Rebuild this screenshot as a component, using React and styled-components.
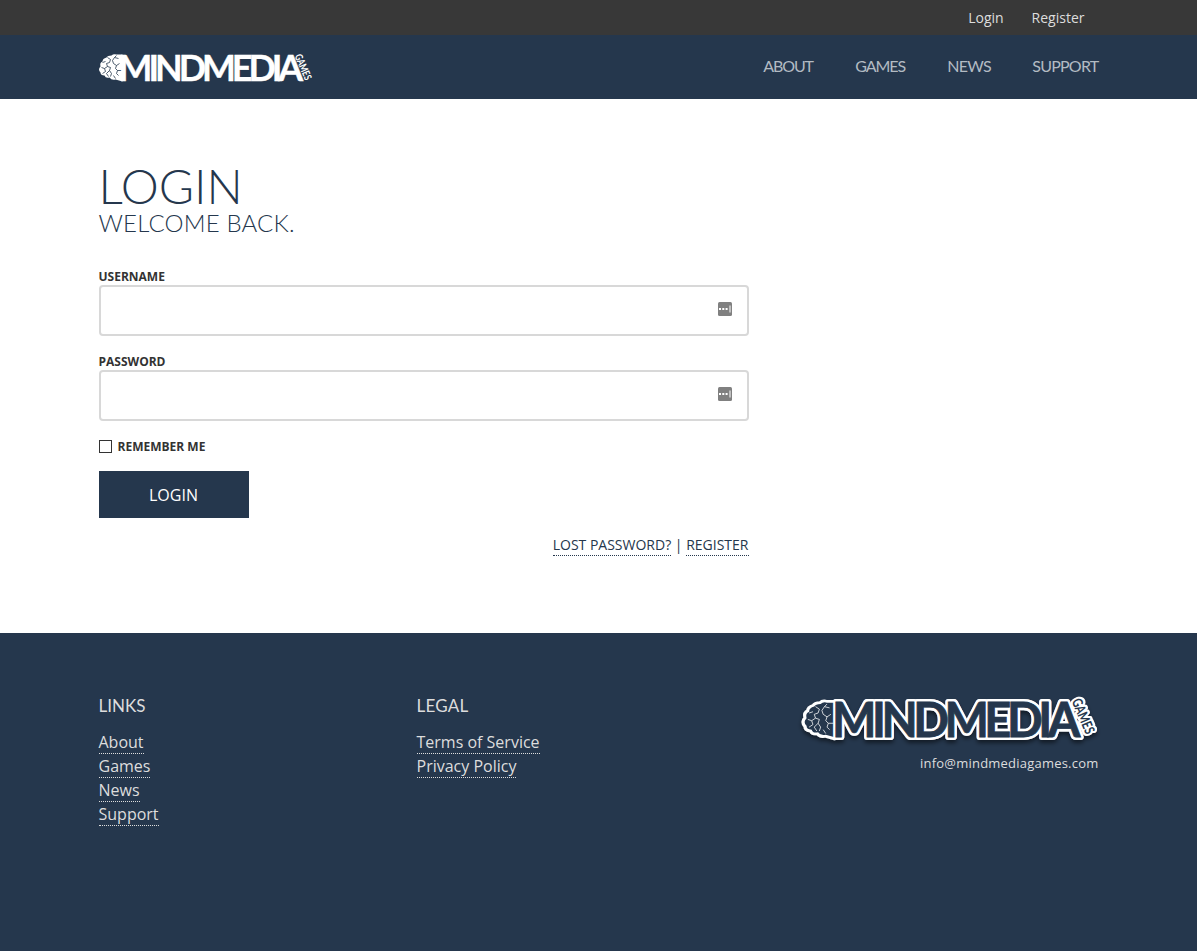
import React from 'react';
import styled, { createGlobalStyle } from 'styled-components';

const navy = '#25374d';

const GlobalStyle = createGlobalStyle`
  *, *::before, *::after { box-sizing: border-box; }
  body {
    margin: 0;
    background: #fff;
    color: #333;
    font-family: 'Open Sans', sans-serif;
    font-size: 16px;
  }
`;

const Page = styled.div`
  display: flex;
  flex-direction: column;
  height: 951px;
  overflow: hidden;
`;

const Container = styled.div`
  width: 1000px;
  margin: 0 auto;
`;

const TopBar = styled.div`
  flex: none;
  height: 35px;
  background: #383838;
`;

const TopLinks = styled(Container)`
  display: flex;
  justify-content: flex-end;
  gap: 28px;
  padding-right: 14px;
`;

const TopLink = styled.a`
  color: #ddd;
  font-size: 14px;
  line-height: 35px;
`;

const Header = styled.header`
  flex: none;
  height: 64px;
  background: ${navy};
`;

const HeaderInner = styled(Container)`
  display: flex;
  justify-content: space-between;
  height: 64px;
`;

const Nav = styled.nav`
  display: flex;
  gap: 41px;
`;

const NavLink = styled.a`
  width: ${(p) => p.$width}px;
  color: #b3bbc3;
  font-family: Lato, sans-serif;
  font-size: 16px;
  line-height: 61px;
  letter-spacing: ${(p) => p.$spacing}px;
  white-space: nowrap;
`;

const Main = styled.main`
  flex: none;
  height: 534px;
  padding-top: 62px;
`;

const Title = styled.h1`
  margin: 0;
  color: ${navy};
  font: 300 48px/50px Lato, sans-serif;
  letter-spacing: 0;
`;

const Subtitle = styled.h2`
  margin: 0 0 36px;
  color: ${navy};
  font: 300 24px/24px Lato, sans-serif;
  letter-spacing: 0.17px;
`;

const Form = styled.form`
  display: flex;
  flex-direction: column;
  align-items: flex-start;
  width: 650px;
`;

const Field = styled.label`
  display: block;
  width: 100%;
  height: 85px;
  font-size: 12px;
  font-weight: 700;
  line-height: 11px;
`;

const InputBox = styled.div`
  display: flex;
  align-items: center;
  width: 100%;
  height: 51px;
  margin-top: 3px;
  padding: 0 15px 3px 10px;
  border: 2px solid #d8d8d8;
  border-radius: 4px;
`;

const Input = styled.input`
  flex: 1;
  border: 0;
  outline: 0;
  background: transparent;
  font: 16px 'Open Sans', sans-serif;
`;

const Remember = styled.label`
  display: flex;
  align-items: center;
  gap: 6px;
  height: 13px;
  margin-top: -1px;
  font-size: 12px;
  font-weight: 700;
`;

const Checkbox = styled.input`
  appearance: none;
  width: 13px;
  height: 13px;
  margin: 0;
  border: 1px solid #333;
  background: #fff;
`;

const Submit = styled.button`
  width: 150px;
  height: 47px;
  margin-top: 18px;
  padding: 0;
  border: 0;
  background: ${navy};
  color: #fff;
  font: 16px 'Open Sans', sans-serif;
`;

const FormLinks = styled.div`
  align-self: flex-end;
  margin-top: 17px;
  color: ${navy};
  font-size: 14px;
  line-height: 20px;
`;

const DottedLink = styled.a`
  display: inline-block;
  border-bottom: 1px dotted currentColor;
`;

const Footer = styled.footer`
  flex: 1;
  background: ${navy};
  color: #ddd;
`;

const FooterInner = styled(Container)`
  display: grid;
  grid-template-columns: 318px 318px 1fr;
  padding-top: 60px;
`;

const FooterHeading = styled.h3`
  margin: 0 0 12px;
  font: 400 17px/25px Lato, sans-serif;
  letter-spacing: ${(p) => p.$spacing}px;
`;

const LinkList = styled.ul`
  margin: 0;
  padding: 0;
  list-style: none;
`;

const LinkItem = styled.li`
  height: 24px;
  line-height: 21px;

  ${DottedLink} {
    padding-top: 2px;
  }
`;

const Brand = styled.div`
  display: flex;
  flex-direction: column;
  align-items: flex-end;
`;

const Email = styled.a`
  margin-top: 2px;
  font-size: 13px;
  line-height: 20px;
  letter-spacing: 0.22px;
`;

const LogoArt = styled.svg`
  display: block;
  flex: none;
  overflow: visible;
`;

const KeyIcon = styled.svg`
  display: block;
  flex: none;
`;

const brainOutline =
  'M24 1 L18 1 Q15 0 13 2 Q9 2 8 4 Q4 5 4 8 Q1 9 2 13 Q-1 16 2 19 Q2 22 6 22 Q7 25 11 24 Q13 27 17 26 L24 28 Z';
const brainFolds =
  'M18 2 L16 4 L20 5 M16 4 L14 7 L15 10 M9 4 L12 6 L11 9 L8 10 M4 9 L7 8 M8 10 L9 13 L6 15 L3 14 M9 13 L12 14 L11 17 L13 20 M6 15 L7 18 L4 20 M15 10 L18 12 L17 15 L19 17 L23 17 M19 17 L18 20 L20 22 M11 17 L8 20 L10 23 M13 20 L12 23 M15 22 L17 25 M18 12 L21 10';

function HeaderLogo() {
  return (
    <LogoArt width="213" height="64" viewBox="0 0 213 64" aria-label="MindMedia Games">
      <g transform="translate(-0.5 18.5)">
        <path d={brainOutline} fill="#fff" />
        <path d={brainFolds} fill="none" stroke={navy} strokeWidth="0.8" />
      </g>
      <text transform="translate(19.5 45.7) scale(0.97 1)" fill="#fff" stroke="#fff" strokeWidth="0.4" fontFamily="Lato" fontWeight="700" fontSize="37" textLength="190.5" lengthAdjust="spacing">MINDMEDIA</text>
      <text transform="translate(195.5 21) rotate(67)" fill="#fff" fontFamily="Lato" fontWeight="700" fontSize="10.5" textLength="27" lengthAdjust="spacingAndGlyphs">GAMES</text>
    </LogoArt>
  );
}

function FooterLogo() {
  const word = { transform: 'translate(31 44) scale(0.97 1)', fontFamily: 'Lato', fontWeight: 700, fontSize: 48.5, textLength: 256, lengthAdjust: 'spacing' };
  const games = { transform: 'translate(270.5 8) rotate(67)', fontFamily: 'Lato', fontWeight: 700, fontSize: 14, textLength: 37, lengthAdjust: 'spacingAndGlyphs' };
  return (
    <LogoArt width="298" height="58" viewBox="0 0 298 58" aria-label="MindMedia Games">
      <defs>
        <filter id="logo-shadow" x="-5%" y="-20%" width="110%" height="150%">
          <feDropShadow dx="0" dy="3" stdDeviation="2" floodColor="#000" floodOpacity="0.5" />
        </filter>
      </defs>
      <g filter="url(#logo-shadow)" fill="#fff" stroke="#fff" strokeLinejoin="round">
        <path d={brainOutline} transform="translate(2 8) scale(1.32)" strokeWidth="3.5" />
        <text {...word} strokeWidth="6">MINDMEDIA</text>
        <text {...games} strokeWidth="5">GAMES</text>
      </g>
      <path d={brainOutline} transform="translate(3 8.5) scale(1.28)" fill={navy} />
      <path d={brainFolds} transform="translate(3 8.5) scale(1.28)" fill="none" stroke="#fff" strokeWidth="0.6" />
      <text {...word} fill="none" stroke="#fff" strokeWidth="5.5" strokeLinejoin="round">MINDMEDIA</text>
      <text {...word} fill={navy} stroke={navy} strokeWidth="0.8">MINDMEDIA</text>
      <text {...games} fill="#fff" stroke="#fff" strokeWidth="4" strokeLinejoin="round">GAMES</text>
      <text {...games} fill={navy}>GAMES</text>
    </LogoArt>
  );
}

function FieldIcon() {
  return (
    <KeyIcon width="14" height="14" viewBox="0 0 14 14">
      <rect width="14" height="14" rx="1.5" fill="#808080" />
      <path d="M1 6h2v2H1zM4.3 6h2v2h-2zM7.6 6h2v2h-2zM11.5 3.5h1v7h-1z" fill="#fff" />
    </KeyIcon>
  );
}

const navItems = [
  { label: 'ABOUT', width: 51, spacing: -1.1 },
  { label: 'GAMES', width: 51, spacing: -1.05 },
  { label: 'NEWS', width: 44, spacing: -0.75 },
  { label: 'SUPPORT', width: 66.3, spacing: -0.75 },
];

function LinkColumn({ title, spacing, links }) {
  return (
    <div>
      <FooterHeading $spacing={spacing}>{title}</FooterHeading>
      <LinkList>
        {links.map((l) => (
          <LinkItem key={l}><DottedLink>{l}</DottedLink></LinkItem>
        ))}
      </LinkList>
    </div>
  );
}

export default function App() {
  return (
    <Page>
      <GlobalStyle />
      <TopBar>
        <TopLinks>
          <TopLink>Login</TopLink>
          <TopLink>Register</TopLink>
        </TopLinks>
      </TopBar>
      <Header>
        <HeaderInner>
          <HeaderLogo />
          <Nav>
            {navItems.map((n) => (
              <NavLink key={n.label} $width={n.width} $spacing={n.spacing}>{n.label}</NavLink>
            ))}
          </Nav>
        </HeaderInner>
      </Header>
      <Main>
        <Container>
          <Title>LOGIN</Title>
          <Subtitle>WELCOME BACK.</Subtitle>
          <Form>
            <Field>USERNAME<InputBox><Input type="text" /><FieldIcon /></InputBox></Field>
            <Field>PASSWORD<InputBox><Input type="password" /><FieldIcon /></InputBox></Field>
            <Remember><Checkbox type="checkbox" />REMEMBER ME</Remember>
            <Submit type="button">LOGIN</Submit>
            <FormLinks>
              <DottedLink>LOST PASSWORD?</DottedLink> | <DottedLink>REGISTER</DottedLink>
            </FormLinks>
          </Form>
        </Container>
      </Main>
      <Footer>
        <FooterInner>
          <LinkColumn title="LINKS" spacing={0} links={['About', 'Games', 'News', 'Support']} />
          <LinkColumn title="LEGAL" spacing={0.2} links={['Terms of Service', 'Privacy Policy']} />
          <Brand>
            <FooterLogo />
            <Email>info@mindmediagames.com</Email>
          </Brand>
        </FooterInner>
      </Footer>
    </Page>
  );
}
